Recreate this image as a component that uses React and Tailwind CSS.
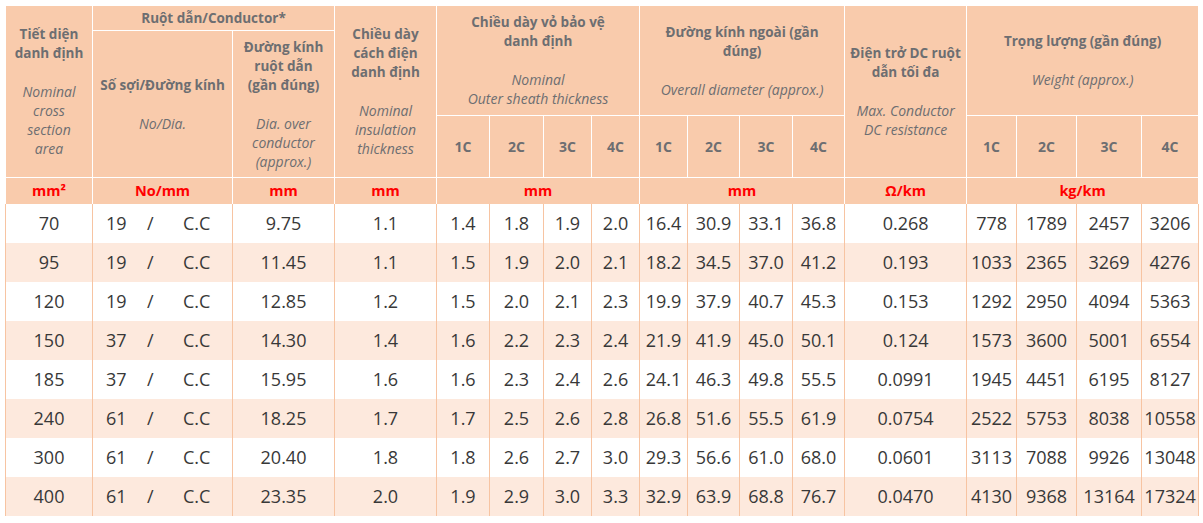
import React from "react";

const rows = [
  ["70", "19", "9.75", "1.1", "1.4", "1.8", "1.9", "2.0", "16.4", "30.9", "33.1", "36.8", "0.268", "778", "1789", "2457", "3206"],
  ["95", "19", "11.45", "1.1", "1.5", "1.9", "2.0", "2.1", "18.2", "34.5", "37.0", "41.2", "0.193", "1033", "2365", "3269", "4276"],
  ["120", "19", "12.85", "1.2", "1.5", "2.0", "2.1", "2.3", "19.9", "37.9", "40.7", "45.3", "0.153", "1292", "2950", "4094", "5363"],
  ["150", "37", "14.30", "1.4", "1.6", "2.2", "2.3", "2.4", "21.9", "41.9", "45.0", "50.1", "0.124", "1573", "3600", "5001", "6554"],
  ["185", "37", "15.95", "1.6", "1.6", "2.3", "2.4", "2.6", "24.1", "46.3", "49.8", "55.5", "0.0991", "1945", "4451", "6195", "8127"],
  ["240", "61", "18.25", "1.7", "1.7", "2.5", "2.6", "2.8", "26.8", "51.6", "55.5", "61.9", "0.0754", "2522", "5753", "8038", "10558"],
  ["300", "61", "20.40", "1.8", "1.8", "2.6", "2.7", "3.0", "29.3", "56.6", "61.0", "68.0", "0.0601", "3113", "7088", "9926", "13048"],
  ["400", "61", "23.35", "2.0", "1.9", "2.9", "3.0", "3.3", "32.9", "63.9", "68.8", "76.7", "0.0470", "4130", "9368", "13164", "17324"],
];

const widths = [87, 140, 102, 102, 53, 54, 48, 48, 48, 52, 53, 52, 122, 50, 60, 65, 57];

const th = "border border-white bg-[#f9cbac] text-[#6d6e71] p-0 text-center align-middle font-bold leading-[19px] whitespace-nowrap";

function Head({ bold, italic }) {
  return (
    <div className="flex flex-col items-center">
      <div className="font-bold text-[13.5px]">{bold}</div>
      <div className="h-[19px]" />
      <div className="italic font-normal text-[14px]">{italic}</div>
    </div>
  );
}

function Lines({ items }) {
  return items.map((t, i) => <div key={i}>{t}</div>);
}

export default function App() {
  const cores = ["1C", "2C", "3C", "4C"];
  return (
    <div className="w-[1203px] h-[523px] bg-white overflow-hidden font-['Open_Sans',sans-serif] pt-[5px] pl-[5px]">
      <table className="border-collapse table-fixed w-[1193px]">
        <colgroup>
          {widths.map((w, i) => (
            <col key={i} style={{ width: w }} />
          ))}
        </colgroup>
        <thead>
          <tr className="h-[25px]">
            <th rowSpan={3} className={th}>
              <Head bold={<Lines items={["Tiết diện", "danh định"]} />} italic={<Lines items={["Nominal", "cross", "section", "area"]} />} />
            </th>
            <th colSpan={2} className={`${th} text-[13.5px]`}>
              Ruột dẫn/Conductor*
            </th>
            <th rowSpan={3} className={th}>
              <Head bold={<Lines items={["Chiều dày", "cách điện", "danh định"]} />} italic={<Lines items={["Nominal", "insulation", "thickness"]} />} />
            </th>
            <th colSpan={4} rowSpan={2} className={th}>
              <Head bold={<Lines items={["Chiều dày vỏ bảo vệ", "danh định"]} />} italic={<Lines items={["Nominal", "Outer sheath thickness"]} />} />
            </th>
            <th colSpan={4} rowSpan={2} className={th}>
              <Head bold={<Lines items={["Đường kính ngoài (gần", "đúng)"]} />} italic={<Lines items={["Overall diameter (approx.)"]} />} />
            </th>
            <th rowSpan={3} className={th}>
              <Head bold={<Lines items={["Điện trở DC ruột", "dẫn tối đa"]} />} italic={<Lines items={["Max. Conductor", "DC resistance"]} />} />
            </th>
            <th colSpan={4} rowSpan={2} className={th}>
              <Head bold={<Lines items={["Trọng lượng (gần đúng)"]} />} italic={<Lines items={["Weight (approx.)"]} />} />
            </th>
          </tr>
          <tr className="h-[85px]">
            <th rowSpan={2} className={th}>
              <Head bold={<Lines items={["Số sợi/Đường kính"]} />} italic={<Lines items={["No/Dia."]} />} />
            </th>
            <th rowSpan={2} className={th}>
              <Head bold={<Lines items={["Đường kính", "ruột dẫn", "(gần đúng)"]} />} italic={<Lines items={["Dia. over", "conductor", "(approx.)"]} />} />
            </th>
          </tr>
          <tr className="h-[62px]">
            {[0, 1, 2].map((g) =>
              cores.map((c) => (
                <th key={`${g}-${c}`} className={`${th} text-[14px]`}>
                  {c}
                </th>
              ))
            )}
          </tr>
          <tr className="h-[26px]">
            {[
              ["mm²", 1],
              ["No/mm", 1],
              ["mm", 1],
              ["mm", 1],
              ["mm", 4],
              ["mm", 4],
              ["Ω/km", 1],
              ["kg/km", 4],
            ].map(([u, span], i) => (
              <th key={i} colSpan={span} className={`${th} border-b-0 text-[14.5px] text-[#ff0000]`}>
                {u}
              </th>
            ))}
          </tr>
        </thead>
        <tbody>
          {rows.map((r, ri) => (
            <tr key={ri} className={`h-[39px] ${ri % 2 === 1 ? "bg-[#fde9dd]" : "bg-white"}`}>
              {r.map((v, ci) => (
                <td key={ci} className="border-x border-[#f7c4a2] p-0 text-center align-middle text-[18px] text-[#383838] whitespace-nowrap">
                  {ci === 1 ? (
                    <div className="flex pl-[13px] text-left">
                      <span className="w-[41px]">{v}</span>
                      <span className="w-[36px]">/</span>
                      <span>C.C</span>
                    </div>
                  ) : (
                    v
                  )}
                </td>
              ))}
            </tr>
          ))}
        </tbody>
      </table>
    </div>
  );
}
